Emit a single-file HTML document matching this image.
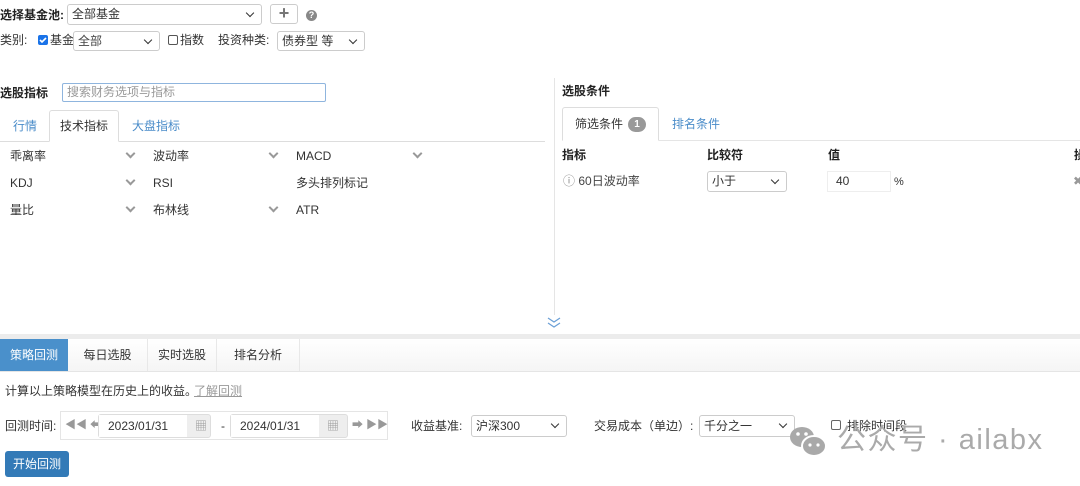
<!DOCTYPE html><html><head><meta charset="utf-8"><style>
*{box-sizing:border-box;margin:0;padding:0}
body{width:1080px;height:486px;background:#fff;font-family:"Liberation Sans","Noto Sans CJK SC",sans-serif;font-size:12px;line-height:16px;color:#333;position:relative;overflow:hidden}
.a{position:absolute;white-space:nowrap}
.b{font-weight:bold;color:#222}
.sel{position:absolute;border:1px solid #ccc;border-radius:3px;background:#fff;padding-left:4px;line-height:18px}
.sel:after{content:"";position:absolute;right:8px;top:5px;width:5px;height:5px;border-right:1.5px solid #333;border-bottom:1.5px solid #333;transform:rotate(45deg)}
.chev{position:absolute;width:7px;height:7px;border-right:2px solid #999;border-bottom:2px solid #999;transform:rotate(45deg)}
.cb{position:absolute;width:10px;height:10px;border:1px solid #555;border-radius:2px;background:#fff}
.blue{color:#4a8cc9}
</style></head><body>
<div class="a b" style="left:0;top:7px">选择基金池:</div>
<div class="sel" style="left:67px;top:4px;width:195px;height:21px">全部基金</div>
<div class="a" style="left:270px;top:4px;width:28px;height:20px;border:1px solid #ccc;border-radius:3px;color:#777;font-weight:bold;font-size:18px;line-height:17px;text-align:center">+</div>
<div class="a" style="left:306px;top:10px;width:11px;height:11px;border-radius:50%;background:#888;color:#fff;font-size:9px;font-weight:bold;text-align:center;line-height:11px">?</div>

<div class="a" style="left:0;top:32px">类别:</div>
<div class="cb" style="left:38px;top:35px;background:#1a73e8;border-color:#1a73e8"><svg width="10" height="10" style="position:absolute;left:-1px;top:-1px"><path d="M2 5l2 2 4-4" stroke="#fff" stroke-width="1.6" fill="none"/></svg></div>
<div class="a" style="left:50px;top:32px">基金</div>
<div class="sel" style="left:73px;top:31px;width:87px;height:20px;color:#444">全部</div>
<div class="cb" style="left:168px;top:35px"></div>
<div class="a" style="left:180px;top:32px">指数</div>
<div class="a" style="left:218px;top:32px">投资种类:</div>
<div class="sel" style="left:277px;top:31px;width:88px;height:20px">债券型 等</div>

<div class="a b" style="left:0;top:85px">选股指标</div>
<div class="a" style="left:62px;top:83px;width:264px;height:19px;border:1px solid #8fb5de;border-radius:2px;color:#999;padding-left:4px;line-height:16px">搜索财务选项与指标</div>
<div class="a" style="left:0;top:141px;width:545px;border-top:1px solid #ddd"></div>
<div class="a" style="left:49px;top:110px;width:70px;height:32px;border:1px solid #ddd;border-bottom:1px solid #fff;border-radius:3px 3px 0 0;background:#fff"></div>
<div class="a blue" style="left:13px;top:118px">行情</div>
<div class="a" style="left:60px;top:118px">技术指标</div>
<div class="a blue" style="left:132px;top:118px">大盘指标</div>
<div class="a" style="left:10px;top:148px">乖离率</div><div class="chev" style="left:127px;top:150px"></div>
<div class="a" style="left:153px;top:148px">波动率</div><div class="chev" style="left:270px;top:150px"></div>
<div class="a" style="left:296px;top:148px">MACD</div><div class="chev" style="left:414px;top:150px"></div>
<div class="a" style="left:10px;top:175px">KDJ</div><div class="chev" style="left:127px;top:177px"></div>
<div class="a" style="left:153px;top:175px">RSI</div>
<div class="a" style="left:296px;top:175px">多头排列标记</div>
<div class="a" style="left:10px;top:202px">量比</div><div class="chev" style="left:127px;top:204px"></div>
<div class="a" style="left:153px;top:202px">布林线</div><div class="chev" style="left:270px;top:204px"></div>
<div class="a" style="left:296px;top:202px">ATR</div>

<div class="a" style="left:554px;top:78px;height:237px;border-left:1px solid #e5e5e5"></div>
<div class="a b" style="left:562px;top:83px">选股条件</div>
<div class="a" style="left:562px;top:140px;width:518px;border-top:1px solid #e5e5e5"></div>
<div class="a" style="left:562px;top:107px;width:97px;height:34px;border:1px solid #ddd;border-bottom:1px solid #fff;border-radius:3px 3px 0 0;background:#fff"></div>
<div class="a" style="left:575px;top:116px">筛选条件</div>
<div class="a" style="left:628px;top:117px;width:18px;height:15px;border-radius:8px;background:#999;color:#fff;font-size:10px;font-weight:bold;text-align:center;line-height:15px">1</div>
<div class="a blue" style="left:672px;top:116px">排名条件</div>
<div class="a b" style="left:562px;top:147px">指标</div>
<div class="a b" style="left:707px;top:147px">比较符</div>
<div class="a b" style="left:828px;top:147px">值</div>
<div class="a b" style="left:1074px;top:147px">操</div>
<div class="a" style="left:563px;top:173px;color:#444"><span style="color:#888">ⓘ</span> 60日波动率</div>
<div class="sel" style="left:707px;top:171px;width:80px;height:21px">小于</div>
<div class="a" style="left:827px;top:171px;width:64px;height:21px;border:1px solid #eee;padding-left:8px;line-height:19px">40</div>
<div class="a" style="left:894px;top:174px;font-size:11px">%</div>
<div class="a" style="left:1073px;top:173px;color:#999">✖</div>
<svg class="a" style="left:547px;top:317px" width="14" height="12"><path d="M1 1l6 4 6-4M1 6l6 4 6-4" stroke="#6a9fd6" fill="none" stroke-width="1.2"/></svg>

<div class="a" style="left:0;top:334px;width:1080px;height:5px;background:#ececec"></div>
<div class="a" style="left:0;top:339px;width:1080px;height:33px;background:linear-gradient(#fff,#f5f5f5);border-bottom:1px solid #e5e5e5"></div>
<div class="a" style="left:0;top:339px;width:68px;height:32px;background:#4a90cb;color:#fff;text-align:center;line-height:32px">策略回测</div>
<div class="a" style="left:68px;top:339px;width:80px;height:32px;border-right:1px solid #e8e8e8;text-align:center;line-height:32px">每日选股</div>
<div class="a" style="left:148px;top:339px;width:69px;height:32px;border-right:1px solid #e8e8e8;text-align:center;line-height:32px">实时选股</div>
<div class="a" style="left:217px;top:339px;width:83px;height:32px;border-right:1px solid #e8e8e8;text-align:center;line-height:32px">排名分析</div>

<div class="a" style="left:5px;top:383px">计算以上策略模型在历史上的收益。</div>
<div class="a" style="left:194px;top:383px;color:#999;text-decoration:underline">了解回测</div>

<div class="a" style="left:5px;top:418px">回测时间:</div>
<div class="a" style="left:60px;top:411px;width:328px;height:29px;border:1px solid #e5e5e5"></div>
<div class="a" style="left:65px;top:417px;color:#999;font-size:11px">◀◀ ⬅</div>
<div class="a" style="left:98px;top:414px;width:113px;height:24px;border:1px solid #ddd;border-radius:3px;background:#eee"></div>
<div class="a" style="left:99px;top:415px;width:88px;height:22px;background:#fff;padding-left:9px;line-height:22px">2023/01/31</div>
<div class="a" style="left:195px;top:418px;color:#999">▦</div>
<div class="a" style="left:221px;top:418px">-</div>
<div class="a" style="left:230px;top:414px;width:118px;height:24px;border:1px solid #ddd;border-radius:3px;background:#eee"></div>
<div class="a" style="left:231px;top:415px;width:88px;height:22px;background:#fff;padding-left:9px;line-height:22px">2024/01/31</div>
<div class="a" style="left:327px;top:418px;color:#999">▦</div>
<div class="a" style="left:352px;top:417px;color:#999;font-size:11px">➡ ▶▶</div>
<div class="a" style="left:411px;top:418px">收益基准:</div>
<div class="sel" style="left:471px;top:415px;width:96px;height:22px;line-height:20px">沪深300</div>
<div class="a" style="left:594px;top:418px">交易成本（单边）:</div>
<div class="sel" style="left:699px;top:415px;width:96px;height:22px;line-height:20px">千分之一</div>
<div class="cb" style="left:831px;top:420px;border-color:#666"></div>
<div class="a" style="left:847px;top:418px">排除时间段</div>
<div class="a" style="left:5px;top:451px;width:64px;height:26px;background:#337ab7;border-radius:3px;color:#fff;text-align:center;line-height:26px">开始回测</div>

<svg class="a" style="left:788px;top:424px" width="42" height="36"><ellipse cx="14" cy="13" rx="12" ry="10" fill="#a9a9a9"/><ellipse cx="26" cy="22" rx="12" ry="10" fill="#a9a9a9" stroke="#fff" stroke-width="2"/><circle cx="10" cy="10" r="1.8" fill="#fff"/><circle cx="18" cy="10" r="1.8" fill="#fff"/><circle cx="22" cy="21" r="1.6" fill="#fff"/><circle cx="30" cy="21" r="1.6" fill="#fff"/></svg>
<div class="a" style="left:837px;top:422px;font-size:29px;line-height:36px;color:#aaa;letter-spacing:1.5px">公众号 · ailabx</div>
</body></html>
